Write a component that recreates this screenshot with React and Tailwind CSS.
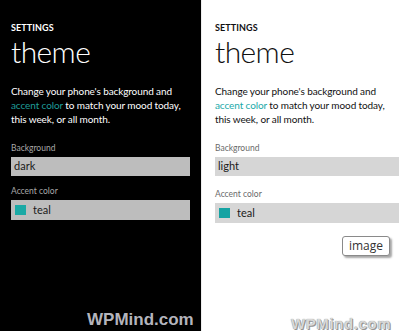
import React from "react";

function Panel({ dark }) {
  const fg = dark ? "text-white" : "text-[#111]";
  const label = dark ? "text-[#a8a8a8]" : "text-[#6a6a6a]";
  const box = dark ? "bg-[#bdbdbd]" : "bg-[#d6d6d6]";
  const accent = dark ? "text-[#1f9c99]" : "text-[#1aa9a9]";
  return (
    <div
      className={`relative flex flex-col h-[331px] ${dark ? "w-[201px] bg-black pl-[11px] pr-[11px]" : "flex-1 bg-white pl-[13px] pr-[8px] border-l border-[#eee]"}`}
      style={{ fontFamily: 'Lato, "Open Sans", sans-serif' }}
    >
      <div className={`mt-[22px] text-[9px] font-bold leading-[12px] tracking-[0.1px] ${fg}`}>SETTINGS</div>
      <div className={`mt-[0px] text-[30px] font-light leading-[34px] tracking-[-0.6px] ${fg}`}>theme</div>
      <div className={`mt-[16px] text-[10px] leading-[14px] tracking-[-0.1px] whitespace-nowrap ${fg}`}>
        Change your phone's background and
        <br />
        <span className={accent}>accent color</span> to match your mood today,
        <br />
        this week, or all month.
      </div>
      <div className={`mt-[16px] text-[8.5px] leading-[12px] ${label}`}>Background</div>
      <div className={`mt-[3px] h-[19px] ${box} flex items-center pl-[3px] text-[11px] text-[#1a1a1a]`}>
        {dark ? "dark" : "light"}
      </div>
      <div className={`${dark ? "mt-[9px]" : "mt-[12px]"} text-[8.5px] leading-[12px] ${label}`}>Accent color</div>
      <div className={`mt-[3px] h-[20px] ${box} flex items-center pl-[4px] text-[11px] text-[#1a1a1a]`}>
        <span className={`w-[11px] h-[10px] ${dark ? "bg-[#1ba9a5]" : "bg-[#15a3a3]"} mr-[7px]`}></span>
        teal
      </div>
      {!dark && (
        <div className="mt-[13px] flex justify-end pr-[9px]">
          <div className="h-[20px] w-[48px] rounded-[3px] border border-[#8a8a8a] bg-white flex items-center justify-center text-[12px] text-[#333] shadow-[2px_2px_2px_rgba(0,0,0,0.35)]" style={{ fontFamily: '"Open Sans", sans-serif' }}>
            image
          </div>
        </div>
      )}
      <div
        className={`absolute font-bold leading-[16px] ${dark ? "left-[87px] top-[312px] text-[17px] text-[#b4b4bc]" : "left-[89px] top-[316px] text-[15px] tracking-[0.6px] text-[#d8d8d8]"}`}
        style={{
          fontFamily: '"Liberation Sans", Arial, sans-serif',
          textShadow: dark ? "none" : "0 0 1px #777, 1px 1px 0 #999",
        }}
      >
        WPMind.com
      </div>
    </div>
  );
}

export default function App() {
  return (
    <div className="flex w-[407px] h-[331px] overflow-hidden bg-white">
      <Panel dark />
      <Panel />
    </div>
  );
}
